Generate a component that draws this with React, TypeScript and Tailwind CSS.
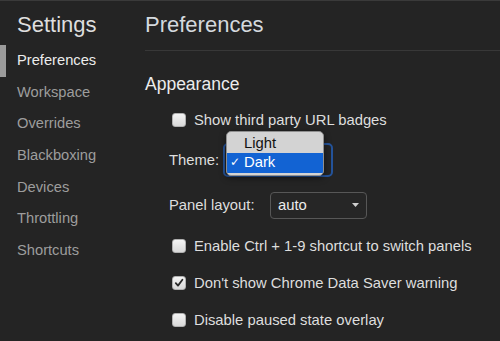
import React from "react";

const font = { fontFamily: '"Liberation Sans", Arial, sans-serif' };

function Checkbox({ checked = false }: { checked?: boolean }) {
  return (
    <div className="w-[14px] h-[14px] rounded-[3px] border border-[#b0b0b0] bg-gradient-to-b from-[#f4f4f4] to-[#d8d8d8] flex items-center justify-center shrink-0">
      {checked && (
        <svg width="10" height="10" viewBox="0 0 10 10">
          <path d="M1.8 5.2 L4 7.6 L8.4 1.8" fill="none" stroke="#2a2a2a" strokeWidth="1.8" strokeLinecap="round" strokeLinejoin="round" />
        </svg>
      )}
    </div>
  );
}

function CheckRow({ label, checked, className }: { label: string; checked?: boolean; className: string }) {
  return (
    <div className={`flex items-center h-[30px] pl-[27px] ${className}`}>
      <Checkbox checked={checked} />
      <span className="ml-[8px] text-[14.8px] leading-[30px] text-[#dedede] whitespace-nowrap">{label}</span>
    </div>
  );
}

const navItems = ["Preferences", "Workspace", "Overrides", "Blackboxing", "Devices", "Throttling", "Shortcuts"];

export default function App() {
  return (
    <div className="w-[500px] h-[341px] overflow-hidden bg-[#242424] border-t border-[#3a3a3a] flex" style={font}>
      <div className="w-[128px] shrink-0 flex flex-col pt-[11px]">
        <div className="pl-[17px] text-[22px] leading-[26px] text-[#dedede]">Settings</div>
        <div className="mt-[7px] flex flex-col">
          {navItems.map((item, i) => (
            <div
              key={item}
              className={`h-[31.7px] leading-[31.7px] text-[14.7px] pl-[11px] border-l-[6px] ${
                i === 0 ? "border-[#9b9b9b] text-[#ececec]" : "border-transparent text-[#9d9d9d]"
              }`}
            >
              {item}
            </div>
          ))}
        </div>
      </div>
      <div className="flex-1 flex flex-col pt-[11px] pl-[17px]">
        <div className="text-[22px] leading-[26px] text-[#d4d9de] pb-[12px] border-b border-[#383838]">Preferences</div>
        <div className="mt-[21px] h-[24px] leading-[24px] text-[17.5px] text-[#ececec]">Appearance</div>
        <CheckRow label="Show third party URL badges" className="mt-[9px]" />
        <div className="relative mt-[8px] h-[34px] pl-[24px] flex items-center">
          <span className="w-[54px] text-[14.8px] text-[#dedede]">Theme:</span>
          <div className="w-[110px] h-[34px] rounded-[5px] border-2 border-[#24539a] bg-[#242424]" />
          <div className="absolute left-[81px] top-[-12px] w-[98px] h-[45px] rounded-[5px] bg-[#d3d3d3] border border-[#8f8f8f] pt-[2px] shadow-[0_2px_6px_rgba(0,0,0,0.5)] overflow-hidden">
            <div className="h-[19.4px] leading-[19.4px] text-[14.8px] text-[#111] pl-[17px]">Light</div>
            <div className="h-[19.4px] leading-[19.4px] text-[14.8px] text-white bg-[#1263d3] flex">
              <span className="w-[17px] pl-[3px] text-[12px]" style={{ fontFamily: '"DejaVu Sans", sans-serif' }}>✓</span>
              <span>Dark</span>
            </div>
          </div>
        </div>
        <div className="mt-[13px] h-[30px] pl-[24px] flex items-center">
          <span className="w-[101px] text-[14.8px] text-[#dedede]">Panel layout:</span>
          <div className="w-[97px] h-[27px] rounded-[4px] border border-[#575757] bg-[#262626] flex items-center justify-between pl-[7px] pr-[7px]">
            <span className="text-[14.8px] text-[#ececec]">auto</span>
            <svg width="7" height="4" viewBox="0 0 7 4">
              <path d="M0 0 L7 0 L3.5 4 Z" fill="#cfcfcf" />
            </svg>
          </div>
        </div>
        <CheckRow label="Enable Ctrl + 1-9 shortcut to switch panels" className="mt-[11px]" />
        <CheckRow label="Don't show Chrome Data Saver warning" checked className="mt-[7px]" />
        <CheckRow label="Disable paused state overlay" className="mt-[7px]" />
      </div>
    </div>
  );
}
